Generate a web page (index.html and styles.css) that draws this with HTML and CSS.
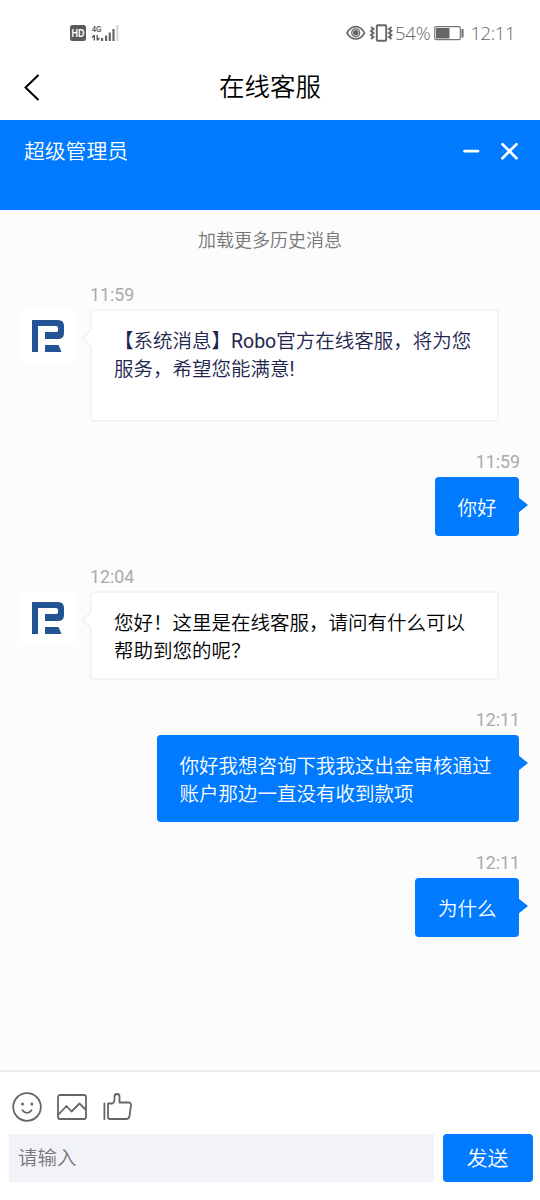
FILE: index.html
```html
<!DOCTYPE html>
<html lang="zh-CN">
<head>
<meta charset="utf-8">
<title>在线客服</title>
<link rel="stylesheet" href="styles.css">
</head>
<body>
<svg class="defs" aria-hidden="true">
  <symbol id="logo" viewBox="0 0 54 54">
    <path fill="#225493" d="M11 11H37Q43 11 43 17V24Q43 30 37 30H24V23H35Q37 23 37 21.500V19Q37 17 35 17H17V43H11ZM24 36H37.500L40.500 43H24Z"/>
  </symbol>
</svg>
<div class="screen">
  <div class="status">
    <div class="status-left">
      <svg width="50" height="20" viewBox="0 0 50 20">
        <rect x="0" y="2" width="16" height="16" rx="2.5" fill="#5a5a5a"/>
        <text x="8" y="14" class="hd" text-anchor="middle" textLength="13" lengthAdjust="spacingAndGlyphs">HD</text>
        <text x="22" y="8.5" class="net" textLength="9.500" lengthAdjust="spacingAndGlyphs">4G</text>
        <path d="M24.300 17.500V12M22 14.500l2.300-2.300M27.200 12v5.500M29.500 15l-2.300 2.300" stroke="#5a5a5a" stroke-width="1.400" fill="none"/>
        <path d="M31 15h2.200v3H31zM35 12.500h2.200V18H35zM38.700 9.500h2.200V18h-2.200zM42.400 6h2.200v12h-2.200z" fill="#666"/>
        <path d="M46.300 2h2.200v16h-2.200z" fill="#d5d5d5"/>
      </svg>
    </div>
    <div class="status-right">
      <svg width="49" height="20" viewBox="0 0 49 20">
        <path d="M1 10C5.500 1.500 14 1.500 18.500 10C14 18 5.500 18 1 10Z" fill="none" stroke="#666" stroke-width="1.600"/>
        <circle cx="9.700" cy="9.800" r="4" fill="none" stroke="#666" stroke-width="1.300"/>
        <circle cx="9.700" cy="9.800" r="2.800" fill="#666"/>
        <rect x="30.800" y="2.300" width="9.400" height="15.400" rx="1" fill="none" stroke="#666" stroke-width="1.900"/>
        <path d="M25 4l2.500 2-2.500 2 2.500 2-2.500 2 2.500 2-2.500 2M45.500 4l-2.500 2 2.500 2-2.500 2 2.500 2-2.500 2 2.500 2" fill="none" stroke="#666" stroke-width="1.900"/>
      </svg>
      <span class="percent">54%</span>
      <svg class="battery" width="31" height="15" viewBox="0 0 31 15">
        <rect x=".7" y=".7" width="25.600" height="13" rx="1.500" fill="none" stroke="#777" stroke-width="1.200"/>
        <rect x="2" y="2" width="13.500" height="10.500" fill="#666"/>
        <path d="M28.500 3v8.500" stroke="#666" stroke-width="2"/>
      </svg>
      <span class="clock">12:11</span>
    </div>
  </div>

  <header class="nav">
    <svg class="back" width="18" height="28" viewBox="0 0 18 28"><path d="M14.500 2L1.500 14.500L14.500 27" fill="none" stroke="#000" stroke-width="2"/></svg>
    <h1 class="nav-title">在线客服</h1>
  </header>

  <div class="agent">
    <span class="agent-name">超级管理员</span>
    <svg width="58" height="20" viewBox="0 0 58 20"><path d="M2.500 10.200H16M40.500 3.200l14 14M54.500 3.200L40.500 17.200" stroke="#fff" stroke-width="2.700" stroke-linecap="round"/></svg>
  </div>

  <main class="chat">
    <div class="history">加载更多历史消息</div>

    <div class="message incoming">
      <time class="time">11:59</time>
      <svg class="avatar"><use href="#logo"/></svg>
      <div class="bubble system">【系统消息】<span class="latin">Robo</span>官方在线客服，将为您<br>服务，希望您能满意<span class="latin">!</span></div>
    </div>

    <div class="message outgoing">
      <time class="time">11:59</time>
      <div class="bubble">你好</div>
    </div>

    <div class="message incoming">
      <time class="time">12:04</time>
      <svg class="avatar"><use href="#logo"/></svg>
      <div class="bubble">您好！这里是在线客服，请问有什么可以<br>帮助到您的呢？</div>
    </div>

    <div class="message outgoing">
      <time class="time">12:11</time>
      <div class="bubble multiline">你好我想咨询下我我这出金审核通过<br>账户那边一直没有收到款项</div>
    </div>

    <div class="message outgoing last">
      <time class="time">12:11</time>
      <div class="bubble">为什么</div>
    </div>
  </main>

  <footer class="composer">
    <svg class="tools" width="122" height="32" viewBox="0 0 122 32">
      <g fill="none" stroke="#666" stroke-width="1.800" stroke-linejoin="round" stroke-linecap="round">
        <circle cx="15" cy="16" r="13.800"/>
        <path d="M10.500 19.300Q15 24.500 19.500 19.300"/>
        <rect x="46" y="4" width="28" height="24" rx="2"/>
        <path d="M46.500 23.500L54.500 15l5 5.500 8-8 6 6"/>
        <path d="M96 12.500H100Q102.500 12 102.500 8V5.500Q102.500 3 105 3Q107.500 3 107.500 5.500V11.500H116.500Q119.300 11.500 119 14.500L117.500 25Q117 28 114.500 28H98Q96 28 96 26ZM92.400 12.500V28"/>
      </g>
      <circle cx="10.500" cy="13" r="1.500" fill="#666"/><circle cx="19.800" cy="13" r="1.500" fill="#666"/>
    </svg>
    <div class="entry">
      <input class="field" type="text" placeholder="请输入">
      <button class="send">发送</button>
    </div>
  </footer>
</div>
</body>
</html>
```
FILE: styles.css
```css
* { box-sizing: border-box; }
body {
  margin: 0;
  font-family: Roboto, "Noto Sans CJK SC", sans-serif;
  font-weight: 350;
  color: #000;
  background: #fff;
}
svg { display: block; flex: none; }
.defs { position: absolute; width: 0; height: 0; }
.screen {
  display: flex;
  flex-direction: column;
  width: 540px;
  height: 1200px;
  overflow: hidden;
}
.status {
  display: flex;
  justify-content: space-between;
  align-items: center;
  height: 56px;
  padding: 10px 25px 0 70px;
}
.status-right {
  display: flex;
  align-items: center;
  width: 169px;
  color: #666;
  font: 300 18.5px/20px "Open Sans", sans-serif;
}
.percent { width: 37px; letter-spacing: -.2px; }
.battery { margin-left: 4px; }
.clock { margin-left: 5px; white-space: nowrap; letter-spacing: -.4px; }
.hd { font: bold 10px "Liberation Sans", sans-serif; fill: #fff; }
.net { font: bold 9.5px "Liberation Sans", sans-serif; fill: #5a5a5a; }

.nav {
  display: grid;
  grid-template-columns: 60px 1fr 60px;
  align-items: center;
  height: 64px;
  padding-bottom: 2px;
}
.back { margin-left: 24px; }
.nav-title { margin: 0; text-align: center; font-size: 25.5px; font-weight: inherit; line-height: 36px; }

.agent {
  display: flex;
  justify-content: space-between;
  align-items: flex-start;
  height: 90px;
  padding: 21px 20px 0 24px;
  color: #fff;
  background: #007aff;
}
.agent-name { margin-top: -4px; font-size: 20.8px; line-height: 30px; }

.chat {
  display: flex;
  flex-direction: column;
  height: 860px;
  padding: 17px 20px 0;
  background: #fcfcfc;
}
.history { color: #777; font-size: 18px; line-height: 28px; text-align: center; }

.message { display: grid; }
.incoming {
  grid-template-columns: 70px 409px;
  grid-template-rows: 28px auto;
  margin-top: 27px;
}
.history + .incoming { margin-top: 26px; }
.outgoing {
  grid-template-rows: 29px auto;
  justify-items: end;
  margin-top: 26px;
  padding-right: 1px;
}
.outgoing.last { margin-top: 27px; }
.time { color: #aaa; font-size: 17.8px; font-weight: 400; line-height: 28px; }
.incoming .time { grid-column: 2; }
.outgoing .time { margin-right: -1px; }
.latin { font-weight: 400; }
.avatar { width: 54px; height: 54px; margin-left: 1px; background: #fff; }

.bubble {
  position: relative;
  padding: 18px 22.5px 13px;
  border-radius: 4px;
  font-size: 19.5px;
  line-height: 28px;
  white-space: nowrap;
}
.multiline { width: 362px; }
.incoming .bubble { border: 2px solid #f3f3f3; padding: 17px 22px 12px; background: #fff; }
.incoming .system { height: 113px; color: #22264f; }
.outgoing .bubble { color: #fff; background: #007aff; }
.outgoing .bubble::after {
  content: "";
  position: absolute;
  top: 20px;
  left: calc(100% - 1px);
  border: 8px solid transparent;
  border-left: 10px solid #007aff;
  border-right: 0;
}
.incoming .bubble::before {
  content: "";
  position: absolute;
  top: 20px;
  left: -8px;
  width: 12px;
  height: 12px;
  border: solid #f3f3f3;
  border-width: 0 0 2px 2px;
  background: #fff;
  transform: rotate(45deg);
}

.composer { height: 130px; border-top: 2px solid #eee; background: #fff; }
.tools { margin: 19px 0 0 12px; }
.entry { display: flex; gap: 9px; padding: 11px 7.5px 0 9px; }
.field {
  flex: 1;
  min-width: 0;
  height: 48px;
  padding: 0 9px;
  border: 0;
  background: #f2f3f8;
  font: inherit;
  font-size: 19.5px;
}
.field::placeholder { color: #777; opacity: 1; }
.send {
  width: 90px;
  height: 48px;
  padding: 0 0 3px;
  border: 0;
  border-radius: 4px;
  color: #fff;
  background: #007aff;
  font: inherit;
  font-size: 20.8px;
}
```
